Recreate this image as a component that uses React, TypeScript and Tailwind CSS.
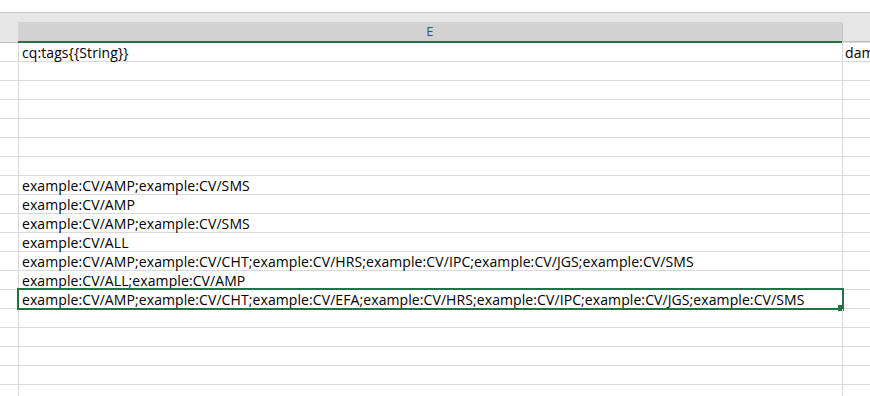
const rows: { e?: string; f?: string; selected?: boolean }[] = [
  { e: "cq:tags{{String}}", f: "dam" },
  {},
  {},
  {},
  {},
  {},
  {},
  { e: "example:CV/AMP;example:CV/SMS" },
  { e: "example:CV/AMP" },
  { e: "example:CV/AMP;example:CV/SMS" },
  { e: "example:CV/ALL" },
  { e: "example:CV/AMP;example:CV/CHT;example:CV/HRS;example:CV/IPC;example:CV/JGS;example:CV/SMS" },
  { e: "example:CV/ALL;example:CV/AMP" },
  {
    e: "example:CV/AMP;example:CV/CHT;example:CV/EFA;example:CV/HRS;example:CV/IPC;example:CV/JGS;example:CV/SMS",
    selected: true,
  },
  {},
  {},
  {},
  {},
  {},
];

export default function App() {
  return (
    <div className="w-[870px] h-[396px] overflow-hidden bg-white font-['Open_Sans',sans-serif] text-[14px] tracking-[0.09px] text-black">
      <div className="h-[12px] bg-white" />
      {/* column headers */}
      <div className="flex h-[31px] border-t border-[#c8c8c8] bg-[#e6e6e6]">
        <div className="w-[18px] shrink-0 border-b border-[#bdbdbd]" />
        <div className="flex w-[824px] shrink-0 flex-col">
          <div className="h-[10px]" />
          <div className="flex flex-1 items-center justify-center bg-[#d2d2d2] text-[13px] text-[#2f5f47]">
            E
          </div>
          <div className="h-[2px] bg-[#217346]" />
        </div>
        <div className="flex flex-1 flex-col">
          <div className="h-[10px]" />
          <div className="flex-1 border-l border-[#c0c0c0]" />
          <div className="h-[1px] bg-[#bdbdbd]" />
          <div className="h-[1px] bg-[#dcdcdc]" />
        </div>
      </div>
      {/* grid */}
      {rows.map((r, i) => (
        <div key={i} className="flex h-[19px] border-b border-[#d9d9d9]">
          <div className="w-[19px] shrink-0 border-r border-[#d9d9d9]" />
          <div className="relative w-[824px] shrink-0 border-r border-[#d9d9d9]">
            <div className="flex h-full items-center whitespace-nowrap pl-[3px] pt-[1px] leading-none">{r.e}</div>
            {r.selected && (
              <>
                <div className="absolute -left-[2px] -top-[2px] h-[22px] w-[827px] border-2 border-[#217346]" />
                <div className="absolute -bottom-[3px] -right-[2px] h-[6px] w-[6px] bg-[#217346]" />
              </>
            )}
          </div>
          <div className="flex min-w-0 flex-1 items-center overflow-hidden whitespace-nowrap pl-[2px] pt-[1px] leading-none">
            {r.f}
          </div>
        </div>
      ))}
    </div>
  );
}
